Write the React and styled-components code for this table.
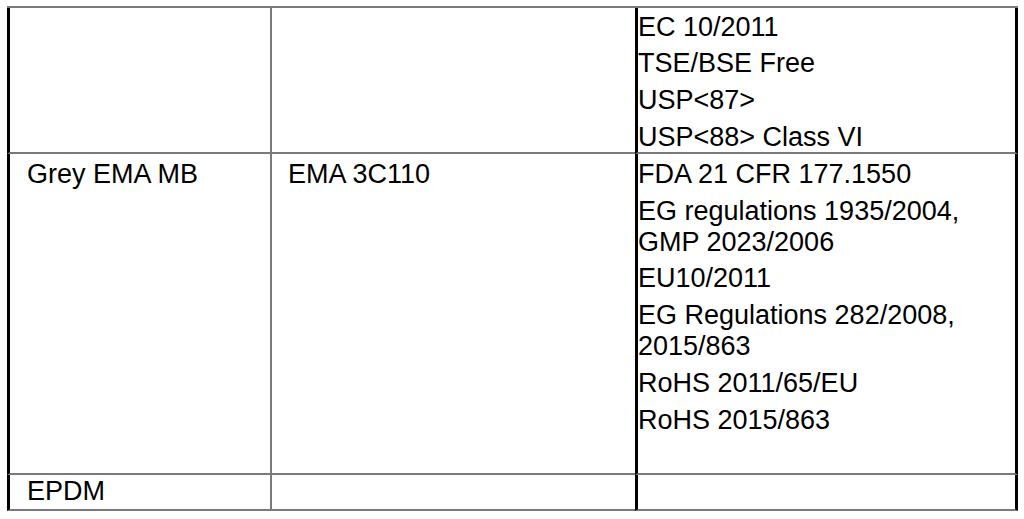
import React from "react";
import styled, { createGlobalStyle } from "styled-components";

const GlobalStyle = createGlobalStyle`
  html, body {
    margin: 0;
    padding: 0;
    background: #ffffff;
  }
  body {
    font-family: "Liberation Sans", Arial, sans-serif;
    color: #000000;
  }
`;

const rows = [
  {
    height: 146,
    padTop: 3.5,
    cells: [[], [], ["EC 10/2011", "TSE/BSE Free", "USP<87>", "USP<88> Class VI"]],
  },
  {
    height: 321,
    padTop: 5,
    cells: [
      ["Grey EMA MB"],
      ["EMA 3C110"],
      [
        "FDA 21 CFR 177.1550",
        ["EG regulations 1935/2004,", "GMP 2023/2006"],
        "EU10/2011",
        ["EG Regulations 282/2008,", "2015/863"],
        "RoHS 2011/65/EU",
        "RoHS 2015/863",
      ],
    ],
  },
  {
    height: 36,
    padTop: 1,
    cells: [["EPDM"], [], []],
  },
];

const Page = styled.div`
  padding: 6px 0 0 7px;
  height: 519px;
  box-sizing: border-box;
  overflow: hidden;
`;

const Table = styled.div`
  display: grid;
  grid-template-columns: 263px 365px 383px;
  grid-template-rows: ${(p) => p.$rows};
  width: 1011px;
  border-top: 2px solid #7a7a7a;
`;

const Cell = styled.div`
  box-sizing: border-box;
  border-bottom: 2px solid #7a7a7a;
  border-left: ${(p) => (p.$col === 1 ? "2px solid #7a7a7a" : "3px solid #000")};
  border-right: ${(p) => (p.$col === 2 ? "3px solid #000" : "none")};
  padding-top: ${(p) => p.$padTop}px;
  padding-left: ${(p) => [17, 16, 0][p.$col]}px;
  font-size: 27px;
  line-height: 30.8px;
`;

const Para = styled.p`
  margin: 0 0 6px;
  white-space: nowrap;
`;

export default function App() {
  return (
    <>
      <GlobalStyle />
      <Page>
        <Table $rows={rows.map((r) => r.height + "px").join(" ")}>
          {rows.map((row, ri) =>
            row.cells.map((items, ci) => (
              <Cell key={ri + "-" + ci} $col={ci} $padTop={row.padTop}>
                {items.map((item, ii) => (
                  <Para key={ii}>
                    {Array.isArray(item) ? (
                      <>
                        {item[0]}
                        <br />
                        {item[1]}
                      </>
                    ) : (
                      item
                    )}
                  </Para>
                ))}
              </Cell>
            ))
          )}
        </Table>
      </Page>
    </>
  );
}
